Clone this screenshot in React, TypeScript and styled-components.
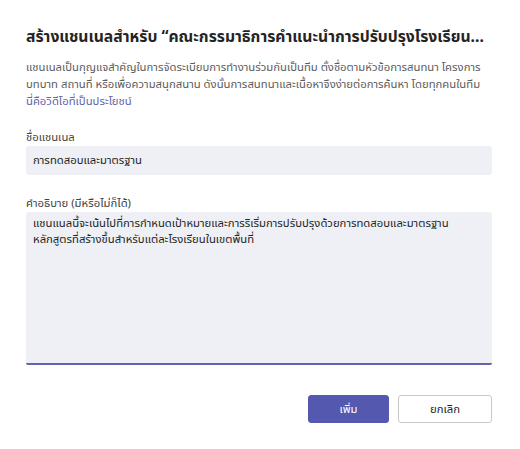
import React from 'react'
import styled, { createGlobalStyle } from 'styled-components'

const GlobalStyle = createGlobalStyle`
  html, body {
    margin: 0;
    padding: 0;
    background: #fff;
  }
  body {
    font-family: "Noto Sans", "Noto Sans Thai", "DejaVu Sans", sans-serif;
    color: #242424;
  }
`

const Dialog = styled.div`
  width: 520px;
  box-sizing: border-box;
  padding: 24px 28px 0 26px;
  display: flex;
  flex-direction: column;
  background: #fff;
`

const Title = styled.h1`
  margin: 0;
  font-size: 15.7px;
  font-weight: 700;
  line-height: 24px;
  color: #242424;
  white-space: nowrap;
`

const Intro = styled.p`
  margin: 10px 0 0;
  font-size: 11.3px;
  line-height: 17px;
  color: #5c5c5c;
  white-space: nowrap;
`

const Link = styled.a`
  color: #6264a7;
  text-decoration: none;
`

const Field = styled.div<{ $top: number }>`
  display: flex;
  flex-direction: column;
  margin-top: ${(p) => p.$top}px;
`

const Label = styled.label`
  font-size: 11.3px;
  line-height: 16px;
  color: #424242;
  margin-bottom: 1px;
`

const Input = styled.div`
  height: 29px;
  box-sizing: border-box;
  padding: 0 7px;
  display: flex;
  align-items: center;
  background: #eef0f5;
  border-radius: 3px;
  font-size: 11.3px;
  color: #242424;
`

const TextArea = styled.div`
  height: 153px;
  box-sizing: border-box;
  padding: 3px 7px;
  background: #eef0f5;
  border-radius: 3px 3px 2px 2px;
  border-bottom: 2px solid #6264a7;
  font-size: 11.3px;
  line-height: 16px;
  color: #242424;
  white-space: nowrap;
`

const Footer = styled.div`
  display: flex;
  justify-content: flex-end;
  gap: 9px;
  margin-top: 30px;
`

const Button = styled.button<{ $primary?: boolean }>`
  height: 28px;
  width: ${(p) => (p.$primary ? 81 : 94)}px;
  box-sizing: border-box;
  border-radius: 3px;
  font-family: inherit;
  font-size: 11.3px;
  cursor: pointer;
  background: ${(p) => (p.$primary ? '#5558af' : '#fff')};
  color: ${(p) => (p.$primary ? '#fff' : '#242424')};
  border: ${(p) => (p.$primary ? '1px solid #5558af' : '1px solid #c8c8c8')};
`

export default function App() {
  return (
    <>
      <GlobalStyle />
      <Dialog>
        <Title>สร้างแชนเนลสำหรับ “คณะกรรมาธิการคำแนะนำการปรับปรุงโรงเรียน...</Title>
        <Intro>
          แชนเนลเป็นกุญแจสำคัญในการจัดระเบียบการทำงานร่วมกันเป็นทีม ตั้งชื่อตามหัวข้อการสนทนา โครงการ
          <br />
          บทบาท สถานที่ หรือเพื่อความสนุกสนาน ดังนั้นการสนทนาและเนื้อหาจึงง่ายต่อการค้นหา โดยทุกคนในทีม
          <br />
          <Link href="#">นี่คือวิดีโอที่เป็นประโยชน์</Link>
        </Intro>
        <Field $top={20}>
          <Label>ชื่อแชนเนล</Label>
          <Input>การทดสอบและมาตรฐาน</Input>
        </Field>
        <Field $top={20}>
          <Label>คำอธิบาย (มีหรือไม่ก็ได้)</Label>
          <TextArea>
            แชนแนลนี้จะเน้นไปที่การกำหนดเป้าหมายและการริเริ่มการปรับปรุงด้วยการทดสอบและมาตรฐาน
            <br />
            หลักสูตรที่สร้างขึ้นสำหรับแต่ละโรงเรียนในเขตพื้นที่
          </TextArea>
        </Field>
        <Footer>
          <Button $primary>เพิ่ม</Button>
          <Button>ยกเลิก</Button>
        </Footer>
      </Dialog>
    </>
  )
}
